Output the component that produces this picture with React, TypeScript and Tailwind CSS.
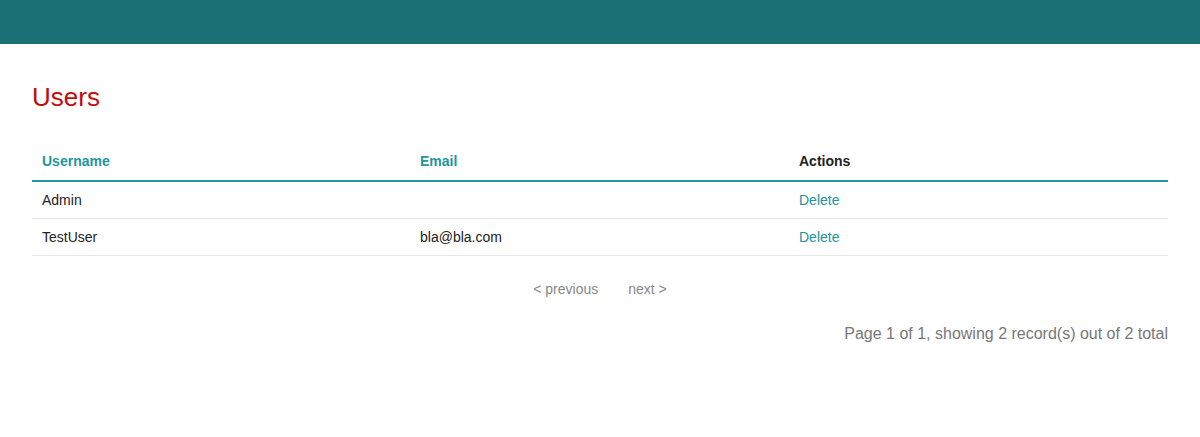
import React from "react";

const users = [
  { username: "Admin", email: "" },
  { username: "TestUser", email: "bla@bla.com" },
];

export default function App() {
  return (
    <div className="min-h-[437px] bg-white" style={{ fontFamily: '"Liberation Sans", Arial, sans-serif' }}>
      <header className="h-[44px] bg-[#1b7076]" />
      <main className="px-[32px] pt-[38px]">
        <h1 className="text-[26px] leading-[31px] text-[#c40a0a]">Users</h1>
        <table className="mt-[29px] w-full table-fixed border-collapse text-[14px]">
          <thead>
            <tr className="border-b-2 border-[#2196a0]">
              <th className="w-[378px] px-[10px] h-[39px] text-left font-bold text-[#2196a0]">Username</th>
              <th className="w-[379px] px-[10px] text-left font-bold text-[#2196a0]">Email</th>
              <th className="px-[10px] text-left font-bold text-[#222]">Actions</th>
            </tr>
          </thead>
          <tbody>
            {users.map((u) => (
              <tr key={u.username} className="border-b border-[#e6e6e6]">
                <td className="px-[10px] pt-[2px] h-[37px] text-[#222]">{u.username}</td>
                <td className="px-[10px] pt-[2px] text-[#222]">{u.email}</td>
                <td className="px-[10px] pt-[2px] text-[#2196a0]">Delete</td>
              </tr>
            ))}
          </tbody>
        </table>
        <div className="mt-[23px] flex justify-center gap-[30px] text-[14px] text-[#888]">
          <span>&lt; previous</span>
          <span>next &gt;</span>
        </div>
        <p className="mt-[22px] text-right text-[16px] text-[#777]">
          Page 1 of 1, showing 2 record(s) out of 2 total
        </p>
      </main>
    </div>
  );
}
